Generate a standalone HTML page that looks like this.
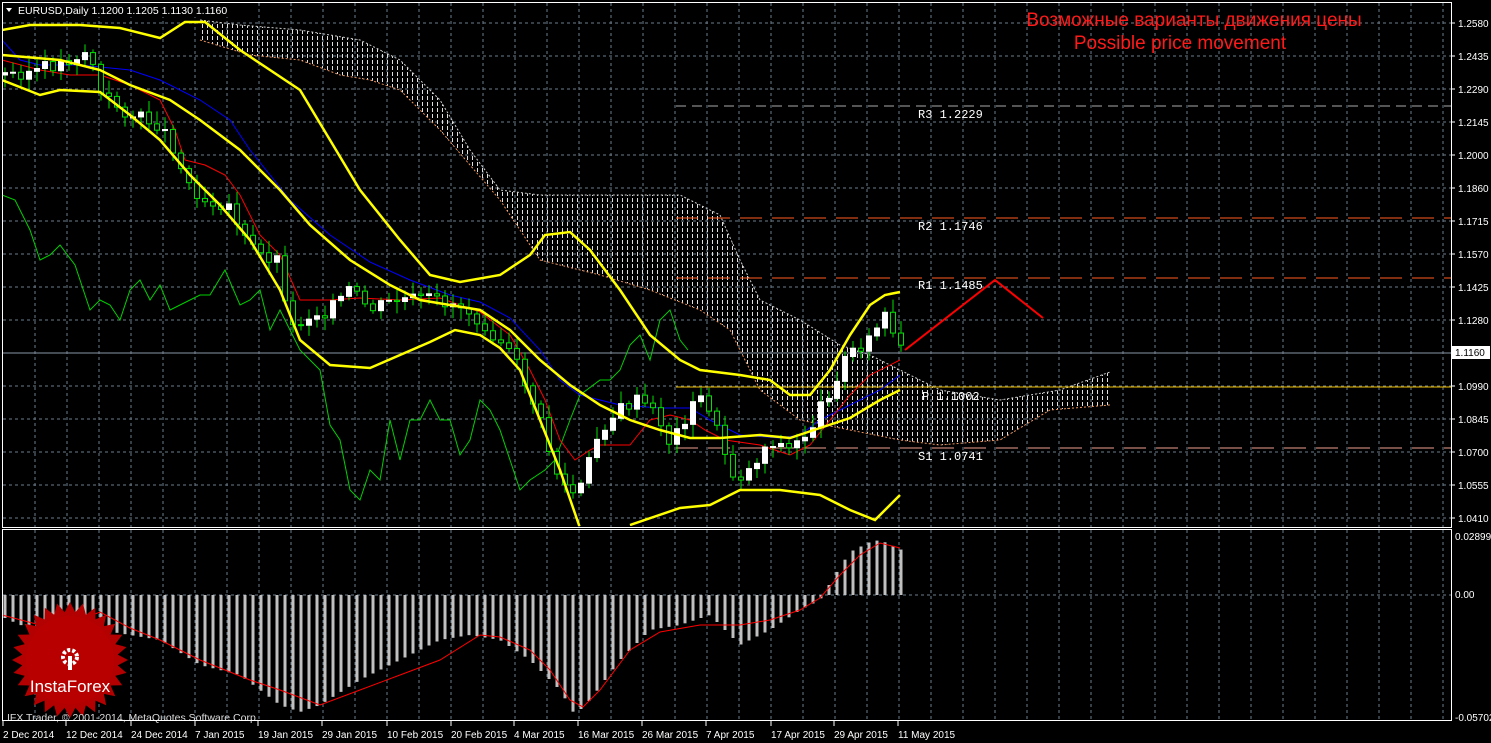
<!DOCTYPE html>
<html><head><meta charset="utf-8"><style>
html,body{margin:0;padding:0;background:#000;width:1491px;height:743px;overflow:hidden}
svg{display:block;font-family:"Liberation Sans",sans-serif}
</style></head><body>
<svg id="s" width="1491" height="743" viewBox="0 0 1491 743">
<defs>
<pattern id="hatch" width="5" height="6" patternUnits="userSpaceOnUse">
<line x1="2.5" y1="0" x2="2.5" y2="4" stroke="#e0e0e0" stroke-width="1"/>
</pattern>
<clipPath id="mc"><rect x="2" y="2" width="1449" height="524"/></clipPath>
<clipPath id="md"><rect x="2" y="530" width="1449" height="190"/></clipPath>
</defs>
<rect width="1491" height="743" fill="#000"/>
<g id="grid" stroke="#6b7b8b" stroke-width="1" stroke-dasharray="3,3"></g>
<g clip-path="url(#mc)">
<polygon fill="url(#hatch)" points="200,20 240,25 300,30 360,40 400,60 440,100 470,150 500,190 540,195 600,195 680,195 720,215 740,260 760,300 800,320 840,345 870,355 900,370 940,390 1000,400 1060,390 1110,372 1110,405 1050,410 1000,440 940,445 900,440 850,430 800,420 760,390 730,330 700,310 650,290 600,275 540,260 500,200 470,165 440,130 400,90 370,80 340,75 300,60 250,55 200,40"/>
<polyline fill="none" stroke="#ccc" stroke-width="1" stroke-dasharray="2,2" points="200,20 240,25 300,30 360,40 400,60 440,100 470,150 500,190 540,195 600,195 680,195 720,215 740,260 760,300 800,320 840,345 870,355 900,370 940,390 1000,400 1060,390 1110,372"/>
<polyline fill="none" stroke="#e8905a" stroke-width="1" stroke-dasharray="2,2" points="200,40 250,55 300,60 340,75 370,80 400,90 440,130 470,165 500,200 540,260 600,275 650,290 700,310 730,330 760,390 800,420 850,430 900,440 940,445 1000,440 1050,410 1110,405"/>
<line x1="2" y1="353" x2="1451" y2="353" stroke="#8a96a3"/>
<line x1="676" y1="106" x2="1451" y2="106" stroke="#aaa" stroke-dasharray="10,6"/>
<line x1="676" y1="218" x2="1451" y2="218" stroke="#ff5a1f" stroke-dasharray="22,10"/>
<line x1="676" y1="278" x2="1451" y2="278" stroke="#ff5a1f" stroke-dasharray="22,10"/>
<line x1="676" y1="387" x2="1451" y2="387" stroke="#f0c000"/>
<line x1="676" y1="448" x2="1451" y2="448" stroke="#f0a090" stroke-dasharray="22,10"/>
<polyline fill="none" stroke="#00d000" stroke-width="1" points="2,195 15,200 30,230 40,260 50,255 60,245 75,265 90,310 100,300 110,305 120,320 130,290 140,280 150,300 160,285 170,310 180,305 190,300 200,295 210,295 225,270 240,305 250,300 260,290 270,330 280,310 290,330 300,350 320,370 330,425 340,440 350,490 360,500 370,470 380,480 390,420 400,460 410,420 420,420 430,400 440,420 450,420 460,455 470,440 480,400 490,410 500,430 510,460 520,490 530,480 545,470 555,460 570,420 580,395 600,380 610,380 620,370 630,345 640,335 650,360 660,320 670,310 680,340 688,350"/>
<polyline fill="none" stroke="#0000ff" stroke-width="1" points="2,40 20,60 40,65 80,65 130,70 160,80 200,100 230,120 250,150 290,200 330,235 370,262 410,280 450,295 480,302 510,318 540,350 560,380 580,395 620,405 660,408 690,408 710,420 740,435 780,438 800,435 820,420 850,405 880,390 900,375"/>
<polyline fill="none" stroke="#ff0000" stroke-width="1" points="2,60 40,70 70,75 100,75 130,85 160,100 175,130 185,160 205,165 225,175 240,195 260,235 280,255 300,300 330,300 360,298 400,300 440,298 480,312 510,335 530,370 545,400 560,440 575,460 590,450 600,445 630,445 650,420 670,415 690,420 705,430 725,440 760,445 790,455 810,445 830,420 850,395 870,375 900,360"/>
<g id="candles"></g>
<g fill="none" stroke="#ffff00" stroke-width="2.5">
<polyline points="2,30 30,25 80,25 120,28 160,38 185,22 205,22 240,50 270,70 300,90 330,140 360,190 400,240 430,275 460,282 500,275 530,255 545,235 570,232 590,250 620,290 650,335 680,360 700,370 740,375 770,380 790,395 810,395 830,370 850,335 870,305 885,295 900,292"/>
<polyline points="2,80 40,95 60,90 100,92 130,115 160,140 190,175 220,205 250,240 280,290 300,340 330,365 370,368 400,355 430,342 455,330 480,335 500,348 520,370 540,420 560,470 580,528"/>
<polyline points="630,525 680,508 710,505 740,490 780,490 820,495 850,510 875,520 900,495"/>
<polyline points="2,55 60,60 100,70 130,85 170,100 200,120 240,150 280,190 310,225 350,260 390,285 420,300 450,305 480,310 510,330 540,360 570,385 600,405 630,420 660,430 690,438 720,438 760,435 790,438 820,428 850,418 880,400 900,390"/>
</g>
<polyline fill="none" stroke="#ff0000" stroke-width="2" points="905,350 995,280 1043,318"/>
</g>
<g fill="#fff" font-family="'Liberation Mono',monospace" font-size="12">
<text x="918" y="118">R3 1.2229</text>
<text x="918" y="230">R2 1.1746</text>
<text x="918" y="289">R1 1.1485</text>
<text x="922" y="400">P 1.1002</text>
<text x="918" y="460">S1 1.0741</text>
</g>
<g fill="#ff1a1a" font-size="19" text-anchor="middle">
<text x="1194" y="26">Возможные варианты движения цены</text>
<text x="1180" y="49">Possible price movement</text>
</g>
<g clip-path="url(#md)">
<g id="macd"></g>
<polyline fill="none" stroke="#ff0000" stroke-width="1" points="2,615 40,625 80,620 100,612 130,628 160,640 200,660 250,680 280,690 320,705 360,690 400,675 440,660 480,635 500,637 530,650 550,670 570,700 583,707 600,690 630,650 660,632 700,625 740,625 770,620 800,610 820,598 840,575 860,555 880,543 900,548"/>
</g>
<g>
<polygon id="star" fill="#b30000"/>
<circle cx="70" cy="660" r="44" fill="#c00000" opacity="0.5"/>
<g fill="#fff"><circle cx="70" cy="657" r="7" fill="none" stroke="#fff" stroke-width="4" stroke-dasharray="3,2"/><rect x="68" y="656" width="4" height="14"/></g>
<text x="70" y="692" fill="#fff" font-size="17" text-anchor="middle">InstaForex</text>
</g>
<text x="7" y="721" fill="#ddd" font-size="10.5">IFX Trader, © 2001-2014, MetaQuotes Software Corp.</text>
<rect x="15" y="3" width="215" height="14" fill="#000"/>
<text x="18" y="14" fill="#fff" font-size="10.5">EURUSD,Daily  1.1200 1.1205 1.1130 1.1160</text>
<polygon points="6,8 12,8 9,12" fill="#fff"/>
<g fill="none" stroke="#fff" stroke-width="1">
<rect x="2.5" y="2.5" width="1449" height="525"/>
<rect x="2.5" y="529.5" width="1449" height="191"/>
</g>
<g id="axis" fill="#fff" font-size="10"></g>
<rect x="1452" y="346" width="38" height="13" fill="#fff"/>
<text x="1455" y="356" fill="#000" font-size="10">1.1160</text>
</svg>
<script>
(function(){
var NS="http://www.w3.org/2000/svg";
function el(p,t,a){var e=document.createElementNS(NS,t);for(var k in a)e.setAttribute(k,a[k]);p.appendChild(e);return e;}
var g=document.getElementById("grid"),ax=document.getElementById("axis");
var labs=["1.2580","1.2435","1.2290","1.2145","1.2000","1.1860","1.1715","1.1570","1.1425","1.1280","1.1135","1.0990","1.0845","1.0700","1.0555","1.0410"];
for(var i=0;i<labs.length;i++){var y=27+i*33;if(i==15)y=522;el(g,"line",{x1:3,y1:y-4,x2:1451,y2:y-4});
el(ax,"line",{x1:1451,y1:y-4,x2:1455,y2:y-4,stroke:"#fff"});var t=el(ax,"text",{x:1458,y:y});t.textContent=labs[i];}
el(g,"line",{x1:3,y1:595,x2:1451,y2:595});
[["0.02899",540],["0.00",598],["-0.05702",721]].forEach(function(a){var t=el(ax,"text",{x:1455,y:a[1]});t.textContent=a[0];});
for(var x=35;x<1451;x+=32){el(g,"line",{x1:x,y1:3,x2:x,y2:527});el(g,"line",{x1:x,y1:530,x2:x,y2:720});}
var dl=[["2 Dec 2014",3],["12 Dec 2014",66],["24 Dec 2014",131],["7 Jan 2015",195],["19 Jan 2015",258],["29 Jan 2015",322],["10 Feb 2015",387],["20 Feb 2015",451],["4 Mar 2015",514],["16 Mar 2015",578],["26 Mar 2015",642],["7 Apr 2015",706],["17 Apr 2015",771],["29 Apr 2015",834],["11 May 2015",898]];
dl.forEach(function(d){el(ax,"line",{x1:d[1],y1:721,x2:d[1],y2:726,stroke:"#fff"});var t=el(ax,"text",{x:d[1],y:738});t.textContent=d[0];});
function interp(pts,x){for(var i=0;i<pts.length-1;i++){if(x>=pts[i][0]&&x<=pts[i+1][0]){var f=(x-pts[i][0])/(pts[i+1][0]-pts[i][0]);return pts[i][1]+f*(pts[i+1][1]-pts[i][1]);}}return pts[pts.length-1][1];}
var cp=[[5,75],[40,70],[70,60],[90,50],[100,95],[130,115],[160,125],[175,150],[185,180],[205,200],[230,205],[245,240],[260,255],[280,260],[290,330],[310,315],[330,310],[350,290],[370,310],[400,300],[430,300],[460,305],[480,320],[500,340],[520,370],[540,420],[555,470],[570,495],[580,490],[600,430],[620,410],[640,400],[660,420],[670,445],[690,410],[705,395],[720,440],[735,480],[750,470],[770,440],[790,450],[810,430],[830,390],[850,350],[870,340],[885,315],[895,345],[902,350]];
var mp=[[5,618],[20,625],[60,630],[100,630],[130,635],[160,640],[200,665],[240,675],[280,705],[300,712],[320,705],[360,680],[400,660],[440,640],[470,635],[500,640],[530,660],[560,690],[575,715],[590,700],[620,660],[650,630],[680,625],[710,615],[740,645],[770,630],[800,610],[820,600],[835,575],[850,552],[870,542],[880,540],[902,550]];
var cg=document.getElementById("candles"),mg=document.getElementById("macd");
var seed=3;function rnd(){seed=(seed*9301+49297)%233280;return seed/233280;}
var prev=interp(cp,5);
for(var x=5;x<=902;x+=8){var c=interp(cp,x)+(rnd()-0.5)*14;var o=prev;var hi=Math.min(o,c)-3-rnd()*10,lo=Math.max(o,c)+3+rnd()*10;
el(cg,"line",{x1:x,y1:hi,x2:x,y2:lo,stroke:"#00e000"});
var ty=Math.min(o,c),h=Math.max(Math.abs(o-c),1);
el(cg,"rect",{x:x-2.5,y:ty,width:5,height:h,fill:c<o?"#fff":"#000",stroke:c<o?"#fff":"#00e000","stroke-width":1});
prev=c;
var m=interp(mp,x);el(mg,"rect",{x:x-1.5,y:Math.min(595,m),width:3,height:Math.abs(m-595),fill:"#c0c0c0"});}
var s=[],n=28;for(var i=0;i<n*2;i++){var a=i*Math.PI/n,r=i%2?48:58;s.push((70+r*Math.cos(a)).toFixed(1)+","+(660+r*Math.sin(a)).toFixed(1));}
document.getElementById("star").setAttribute("points",s.join(" "));
})();
</script>
</body></html>
